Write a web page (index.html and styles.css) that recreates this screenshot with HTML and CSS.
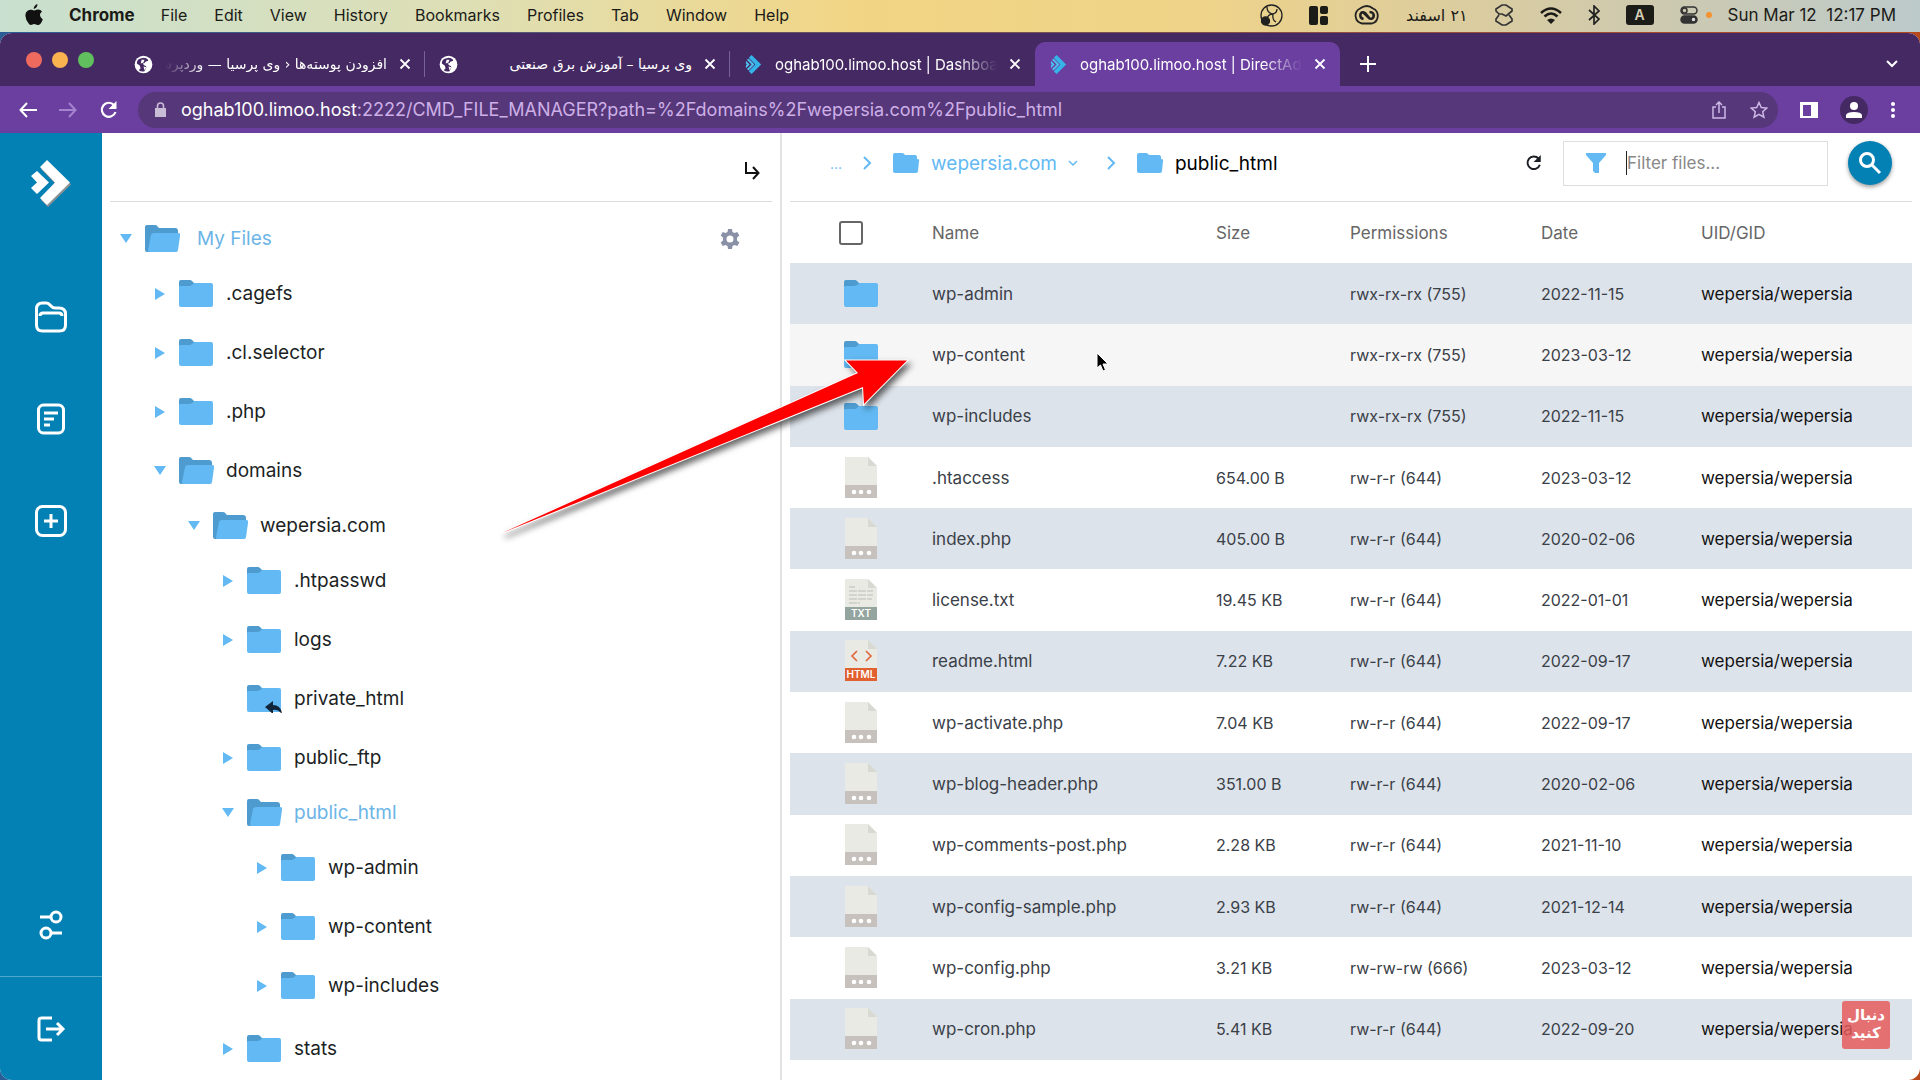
FILE: index.html
```html
<!DOCTYPE html>
<html lang="en">
<head>
    <meta charset="UTF-8">
    <meta name="viewport" content="width=device-width, initial-scale=1.0">
    <title>oghab100.limoo.host | DirectAdmin</title>
    <link rel="stylesheet" href="styles.css">
</head>
<body>
    <!-- Shared icons -->
    <svg class="sprite" width="0" height="0">
        <symbol id="folder" viewBox="0 0 36 29">
            <path d="M1 10V3a2 2 0 0 1 2-2h9q1 0 2 1l3 3v5z" fill="#4e9bcf"/>
            <path d="M1 8q0-1 2-1h9q2 0 4-3h17a2 2 0 0 1 2 2v20a2 2 0 0 1-2 2H3a2 2 0 0 1-2-2z" fill="#63b9f3"/>
        </symbol>
        <symbol id="folder-open" viewBox="0 0 36 29">
            <path d="M1 3a2 2 0 0 1 2-2h8q2 0 3 2l1 1h16a3 3 0 0 1 3 3v4L8 28H3a2 2 0 0 1-2-2z" fill="#4e9bcf"/>
            <path d="M7 11a3 3 0 0 1 3-2h24q3 0 2 3l-2 14a2 2 0 0 1-2 2H5q-1 0-1-2z" fill="#63b9f3"/>
        </symbol>
        <symbol id="folder-crumb" viewBox="0 0 28 22">
            <path d="M1 3a2 2 0 0 1 2-2h7q2 0 3 2h10a2 2 0 0 1 2 2v2q3 0 2 2l-1 10a2 2 0 0 1-2 2H3a2 2 0 0 1-2-2z" fill="#63b9f3"/>
        </symbol>
        <symbol id="file" viewBox="0 0 32 42">
            <path d="M0 0h23l9 9v32H0z" fill="#e9eae3"/>
            <path d="M23 0v9h9z" fill="#d8d9d2"/>
            <path d="M0 28h32v13H0z" fill="#c7c1be"/>
            <circle cx="9" cy="35" r="2.3" fill="#fff"/>
            <circle cx="16" cy="35" r="2.3" fill="#fff"/>
            <circle cx="24" cy="35" r="2.3" fill="#fff"/>
        </symbol>
        <symbol id="globe" viewBox="0 0 20 20">
            <circle cx="10" cy="10" r="9.3" fill="#fff"/>
            <path d="M10 3q4 0 5 3l-3 1q-1 2-3 2l2 2q2 0 2 2l-2 4q-3 1-6-1l2-2-1-3-3-2q0-4 3-5z" fill="#452963"/>
            <path d="M8 5l3 0-1 3-3 1zM10 12l3 1-2 3z" fill="#fff"/>
        </symbol>
        <symbol id="da" viewBox="0 0 18 20">
            <path d="M7 0l10 10L7 20l-3-3 7-7-7-7z" fill="#35b4ea"/>
            <path d="M1 6l4 4-4 4v-3l1-1-1-1zM4 4l6 6-6 6-2-1 5-5-5-5z" fill="#4cc0ee"/>
        </symbol>
        <symbol id="close" viewBox="0 0 12 12">
            <path d="M1.500 1.500l9 9M10.500 1.500l-9 9" stroke="currentColor" stroke-width="1.800"/>
        </symbol>
        <symbol id="reload" viewBox="0 0 20 20">
            <path d="M16.500 12A7 7 0 1 1 15 5" fill="none" stroke="currentColor" stroke-width="2.200"/>
            <path d="M17.500 1v8h-8z" fill="currentColor"/>
        </symbol>
        <symbol id="chevron" viewBox="0 0 10 16">
            <path d="M2 2l6 6-6 6" fill="none" stroke="currentColor" stroke-width="2"/>
        </symbol>
    </svg>

    <header class="menubar">
        <nav class="menu">
            <svg width="18" height="22" viewBox="0 0 18 22" fill="#111"><path d="M12.500 0q0 4-3.800 5Q8.500 1.500 12.500 0zM9 6.500q1 0 2.500-.7 3.500-1 5.500 1.700-4.500 3.500.8 8-2 5-4.300 5.500-1.300 0-2.500-.6-2-.6-3.500.1-2 1.200-3.500-.5-5-6-3-11.500 2-3.400 5.500-2.700z"/></svg>
            <a href="#" class="app">Chrome</a>
            <a href="#">File</a>
            <a href="#">Edit</a>
            <a href="#">View</a>
            <a href="#">History</a>
            <a href="#">Bookmarks</a>
            <a href="#">Profiles</a>
            <a href="#">Tab</a>
            <a href="#">Window</a>
            <a href="#">Help</a>
        </nav>
        <div class="status">
            <svg width="23" height="23" viewBox="0 0 23 23" fill="none" stroke="#222" stroke-width="1.300"><circle cx="11.500" cy="11.500" r="10.500"/><path d="M7 3q0 6 6 7 4-1 4-5M13 10q-1 6 3 8M13 10q-5 0-6 5"/><circle cx="5.500" cy="17" r="4" fill="#222"/></svg>
            <svg width="19" height="19" viewBox="0 0 19 19" fill="#1b1b18"><rect width="9" height="19" rx="2"/><rect x="11" width="8" height="8" rx="2"/><rect x="11" y="10" width="8" height="9" rx="2"/></svg>
            <svg width="26" height="20" viewBox="0 0 26 20" fill="none" stroke="#222"><path d="M8 18.500a8 8 0 0 1-2-15q7-5 13 0a8 8 0 0 1-1 15z" stroke-width="1.800"/><path d="M16 14l-5-6q-3-2-4.500 1-1 4 3 5M9 7l6 6q3 2 4.500-1 1-5-4-5" stroke-width="2.600"/></svg>
            <span class="persian" dir="rtl">۲۱ اسفند</span>
            <svg width="20" height="22" viewBox="0 0 20 22" fill="none" stroke="#333" stroke-width="1.700"><path d="M5 10L2 7V5l6-4h4l6 4v2l-6 5-4-2zM5 11l-3 4v2l6 4h4l6-4v-2l-3-4"/></svg>
            <svg width="22" height="17" viewBox="0 0 22 17" fill="none" stroke="#1b1b18" stroke-width="2.600"><path d="M1 6q10-9 20 0M4.500 9.500q6.500-6 13 0"/><path d="M11 17l-4-4q4-3 8 0z" fill="#1b1b18" stroke="none"/></svg>
            <svg width="12" height="20" viewBox="0 0 12 20" fill="none" stroke="#222" stroke-width="1.700"><path d="M1 5l10 9-5 5V1l5 5-10 9"/></svg>
            <span class="input-lang">A</span>
            <svg width="18" height="18" viewBox="0 0 18 18" fill="none" stroke="#333" stroke-width="1.500"><rect x="1" y="1" width="16" height="7" rx="3.500"/><rect x="1" y="10" width="16" height="7" rx="3.500" fill="#333"/><circle cx="4.500" cy="4.500" r="2.500"/><circle cx="13.500" cy="13.500" r="2.500" fill="#ddd"/></svg>
            <span class="dot"></span>
            <time>Sun Mar 12 &nbsp;12:17 PM</time>
        </div>
    </header>

    <div class="window">
        <div class="tabbar">
            <div class="lights"><i class="red"></i><i class="yellow"></i><i class="green"></i></div>
            <div class="tab">
                <svg width="19" height="19"><use href="#globe"/></svg>
                <span class="tab-title persian fade-left" dir="rtl">افزودن پوسته‌ها ‹ وی پرسیا — وردپرس</span>
                <button aria-label="Close"><svg width="12" height="12"><use href="#close"/></svg></button>
            </div>
            <div class="tab">
                <svg width="19" height="19"><use href="#globe"/></svg>
                <span class="tab-title persian" dir="rtl">وی پرسیا – آموزش برق صنعتی</span>
                <button aria-label="Close"><svg width="12" height="12"><use href="#close"/></svg></button>
            </div>
            <div class="tab no-line">
                <svg width="19" height="19"><use href="#da"/></svg>
                <span class="tab-title fade-right">oghab100.limoo.host | Dashboard</span>
                <button aria-label="Close"><svg width="12" height="12"><use href="#close"/></svg></button>
            </div>
            <div class="tab active">
                <svg width="19" height="19"><use href="#da"/></svg>
                <span class="tab-title fade-right">oghab100.limoo.host | DirectAdmin</span>
                <button aria-label="Close"><svg width="12" height="12"><use href="#close"/></svg></button>
            </div>
            <button class="new-tab" aria-label="New tab"><svg width="16" height="16" viewBox="0 0 16 16"><path d="M8 0v16M0 8h16" stroke="#fff" stroke-width="2"/></svg></button>
            <button class="tab-search" aria-label="Search tabs"><svg width="12" height="8" viewBox="0 0 12 8"><path d="M1 1l5 5 5-5" fill="none" stroke="#fff" stroke-width="2"/></svg></button>
        </div>

        <div class="toolbar">
            <button aria-label="Back"><svg width="18" height="16" viewBox="0 0 18 16"><path d="M8 1L1.500 8 8 15M2 8h16" fill="none" stroke="#fff" stroke-width="2"/></svg></button>
            <button aria-label="Forward"><svg width="18" height="16" viewBox="0 0 18 16"><path d="M10 1l6.500 7-6.500 7M16 8H0" fill="none" stroke="#a583cf" stroke-width="2"/></svg></button>
            <button aria-label="Reload"><svg width="20" height="20"><use href="#reload"/></svg></button>
            <div class="omnibox">
                <svg width="11" height="15" viewBox="0 0 11 15"><path d="M0 6h11v9H0z" fill="#c8bcd6"/><path d="M2.500 7V4q0-3 3-3t3 3v3" fill="none" stroke="#c8bcd6" stroke-width="1.600"/></svg>
                <div class="url" role="textbox" aria-label="Address"><b>oghab100.limoo.host</b>:2222/CMD_FILE_MANAGER?path=%2Fdomains%2Fwepersia.com%2Fpublic_html</div>
                <button aria-label="Share"><svg width="16" height="18" viewBox="0 0 16 18" fill="none" stroke="#cdb9e6" stroke-width="1.500"><path d="M5 6H2v11h12V6h-3M8 12V1M5 4l3-3 3 3"/></svg></button>
                <button aria-label="Bookmark"><svg width="18" height="18" viewBox="0 0 18 18" fill="none" stroke="#cdb9e6" stroke-width="1.500"><path d="M9 1.500l2.300 5 5.500.6-4.100 3.700 1.200 5.400L9 13.400l-4.900 2.800 1.200-5.400L1.200 7.100l5.500-.6z"/></svg></button>
            </div>
            <button aria-label="Side panel"><svg width="18" height="18" viewBox="0 0 18 18"><path d="M0 1h18v16H0z" fill="#fff"/><path d="M3 4h8v11H3z" fill="#6b3fa0"/></svg></button>
            <button class="avatar" aria-label="Profile"><svg width="16" height="16" viewBox="0 0 16 16" fill="#fff"><circle cx="8" cy="4" r="4"/><path d="M0 16v-3q1-3 8-3t8 3v3z"/></svg></button>
            <button aria-label="Menu"><svg width="6" height="18" viewBox="0 0 6 18" fill="#fff"><circle cx="3" cy="3" r="2"/><circle cx="3" cy="9" r="2"/><circle cx="3" cy="15" r="2"/></svg></button>
        </div>

        <div class="page">
            <aside class="sidebar">
                <a href="#" class="logo" aria-label="DirectAdmin"><svg width="42" height="48" viewBox="0 0 42 48"><path d="M18 3l23 22.500L18 48l-7-7 15-15.500-15-15.500z" fill="#8b9296"/><path d="M17 1l23 22.500L17 46l-7-7 15-15.500L10 8z" fill="#fff"/><path d="M7 12l12 11.500L7 35l-6-6 6-5.500L1 17z" fill="#fff"/></svg></a>
                <a href="#" aria-label="Files"><svg width="34" height="34" viewBox="0 0 34 34" fill="none" stroke="#fff" stroke-width="3"><path d="M2.500 9q0-6 6-6h4q2 0 4 2.500T21 8h4q6.500 0 6.500 6v11q0 6-6 6h-17q-6 0-6-6z"/><path d="M6 16q0-3 3-3h16q3 0 3 3"/></svg></a>
                <a href="#" aria-label="Logs"><svg width="34" height="34" viewBox="0 0 34 34" fill="none" stroke="#fff" stroke-width="3"><rect x="4.500" y="3" width="25" height="28" rx="5"/><path d="M10 11h14M10 17h10M10 23h6"/></svg></a>
                <a href="#" aria-label="Add"><svg width="34" height="34" viewBox="0 0 34 34" fill="none" stroke="#fff" stroke-width="3"><rect x="2.500" y="2.500" width="29" height="29" rx="6"/><path d="M17 10v14M10 17h14"/></svg></a>
                <a href="#" class="settings" aria-label="Settings"><svg width="34" height="34" viewBox="0 0 34 34" fill="none" stroke="#fff" stroke-width="3"><circle cx="22" cy="9" r="5"/><circle cx="12" cy="25" r="5"/><path d="M6 9h11M17 25h11"/></svg></a>
                <a href="#" class="logout" aria-label="Log out"><svg width="30" height="26" viewBox="0 0 30 26" fill="none" stroke="#fff" stroke-width="3"><path d="M16 2H5.500Q3 2 3 4.500v17Q3 24 5.500 24H16M10 13h16M21 7l6 6-6 6"/></svg></a>
            </aside>

            <section class="tree-panel">
                <div class="tree-head">
                    <button aria-label="Collapse"><svg width="16" height="18" viewBox="0 0 16 18"><path d="M2 0v11h12M9 5l5.500 6L9 17" fill="none" stroke="#111" stroke-width="2"/></svg></button>
                </div>
                <div class="tree">
                    <div class="node root">
                        <button class="toggle open" aria-label="Toggle"></button>
                        <svg width="36" height="29"><use href="#folder-open"/></svg>
                        <a href="#">My Files</a>
                        <button class="gear" aria-label="Tree settings"><svg width="20" height="20" viewBox="0 0 20 20"><path d="M8 0h4l.5 3 2 1 2.800-1 2 3.500L17 8.500v3l2.300 2-2 3.500-2.800-1-2 1-.5 3H8l-.5-3-2-1-2.800 1-2-3.500 2.300-2v-3L.7 6.500l2-3.500 2.800 1 2-1zM10 6.500a3.500 3.500 0 1 0 0 7 3.500 3.500 0 0 0 0-7z" fill="#8a90a6" fill-rule="evenodd"/></svg></button>
                    </div>
                    <ul>
                        <li><div class="node"><button class="toggle" aria-label="Toggle"></button><svg width="36" height="29"><use href="#folder"/></svg><a href="#">.cagefs</a></div></li>
                        <li><div class="node"><button class="toggle" aria-label="Toggle"></button><svg width="36" height="29"><use href="#folder"/></svg><a href="#">.cl.selector</a></div></li>
                        <li><div class="node"><button class="toggle" aria-label="Toggle"></button><svg width="36" height="29"><use href="#folder"/></svg><a href="#">.php</a></div></li>
                        <li>
                            <div class="node"><button class="toggle open" aria-label="Toggle"></button><svg width="36" height="29"><use href="#folder-open"/></svg><a href="#">domains</a></div>
                            <ul>
                                <li>
                                    <div class="node"><button class="toggle open" aria-label="Toggle"></button><svg width="36" height="29"><use href="#folder-open"/></svg><a href="#">wepersia.com</a></div>
                                    <ul>
                                        <li><div class="node"><button class="toggle" aria-label="Toggle"></button><svg width="36" height="29"><use href="#folder"/></svg><a href="#">.htpasswd</a></div></li>
                                        <li><div class="node"><button class="toggle" aria-label="Toggle"></button><svg width="36" height="29"><use href="#folder"/></svg><a href="#">logs</a></div></li>
                                        <li><div class="node"><span class="toggle none"></span><svg width="36" height="29" viewBox="0 0 36 29"><use href="#folder" width="36" height="29"/><path d="M19 23l8-6v4q8 0 9 9-4-5-9-4v4z" fill="#12263b"/></svg><a href="#">private_html</a></div></li>
                                        <li><div class="node"><button class="toggle" aria-label="Toggle"></button><svg width="36" height="29"><use href="#folder"/></svg><a href="#">public_ftp</a></div></li>
                                        <li class="selected">
                                            <div class="node"><button class="toggle open" aria-label="Toggle"></button><svg width="36" height="29"><use href="#folder-open"/></svg><a href="#" class="current">public_html</a></div>
                                            <ul>
                                                <li><div class="node"><button class="toggle" aria-label="Toggle"></button><svg width="36" height="29"><use href="#folder"/></svg><a href="#">wp-admin</a></div></li>
                                                <li><div class="node"><button class="toggle" aria-label="Toggle"></button><svg width="36" height="29"><use href="#folder"/></svg><a href="#">wp-content</a></div></li>
                                                <li><div class="node"><button class="toggle" aria-label="Toggle"></button><svg width="36" height="29"><use href="#folder"/></svg><a href="#">wp-includes</a></div></li>
                                            </ul>
                                        </li>
                                        <li><div class="node"><button class="toggle" aria-label="Toggle"></button><svg width="36" height="29"><use href="#folder"/></svg><a href="#">stats</a></div></li>
                                    </ul>
                                </li>
                            </ul>
                        </li>
                    </ul>
                </div>
            </section>

            <main class="files">
                <div class="files-head">
                    <nav class="crumbs">
                        <a href="#" class="more">...</a>
                        <svg width="10" height="16"><use href="#chevron"/></svg>
                        <a href="#" class="crumb"><svg width="28" height="22"><use href="#folder-crumb"/></svg>wepersia.com<svg width="10" height="7" viewBox="0 0 10 7"><path d="M1 1l4 4 4-4" fill="none" stroke="#63b9f3" stroke-width="1.500"/></svg></a>
                        <svg width="10" height="16"><use href="#chevron"/></svg>
                        <a href="#" class="crumb here"><svg width="28" height="22"><use href="#folder-crumb"/></svg>public_html</a>
                    </nav>
                    <button class="refresh" aria-label="Refresh"><svg width="18" height="18"><use href="#reload"/></svg></button>
                    <label class="filter">
                        <svg width="20" height="22" viewBox="0 0 20 22"><path d="M0 1h20v2l-7 8v10H9l-2-2v-8L0 3z" fill="#63b9f3"/></svg>
                        <input type="text" placeholder="Filter files..." aria-label="Filter files">
                    </label>
                    <button class="search" aria-label="Search"><svg width="24" height="24" viewBox="0 0 24 24" fill="none" stroke="#fff" stroke-width="3"><circle cx="9" cy="9" r="6.500"/><path d="M14 14l8 8"/></svg></button>
                </div>

                <table>
                    <colgroup>
                        <col class="col-icon"><col><col class="col-size"><col class="col-perm"><col class="col-date"><col class="col-uid">
                    </colgroup>
                    <thead>
                        <tr><th><input type="checkbox" aria-label="Select all"></th><th>Name</th><th>Size</th><th>Permissions</th><th>Date</th><th>UID/GID</th></tr>
                    </thead>
                    <tbody>
                        <tr><td><svg width="36" height="29"><use href="#folder"/></svg></td><td>wp-admin</td><td></td><td>rwx-rx-rx (755)</td><td>2022-11-15</td><td>wepersia/wepersia</td></tr>
                        <tr class="hover"><td><svg width="36" height="29"><use href="#folder"/></svg></td><td>wp-content</td><td></td><td>rwx-rx-rx (755)</td><td>2023-03-12</td><td>wepersia/wepersia</td></tr>
                        <tr><td><svg width="36" height="29"><use href="#folder"/></svg></td><td>wp-includes</td><td></td><td>rwx-rx-rx (755)</td><td>2022-11-15</td><td>wepersia/wepersia</td></tr>
                        <tr><td><svg width="32" height="42"><use href="#file"/></svg></td><td>.htaccess</td><td>654.00 B</td><td>rw-r-r (644)</td><td>2023-03-12</td><td>wepersia/wepersia</td></tr>
                        <tr><td><svg width="32" height="42"><use href="#file"/></svg></td><td>index.php</td><td>405.00 B</td><td>rw-r-r (644)</td><td>2020-02-06</td><td>wepersia/wepersia</td></tr>
                        <tr>
                            <td>
                                <svg width="32" height="42" viewBox="0 0 32 42">
                                    <path d="M0 0h23l9 9v32H0z" fill="#e9eae3"/>
                                    <path d="M23 0v9h9z" fill="#d8d9d2"/>
                                    <path d="M4 8h6M4 12h24M4 16h24M4 20h23M4 24h11" stroke="#b9bcb5" stroke-dasharray="8 1"/>
                                    <path d="M0 28h32v13H0z" fill="#94a49f"/>
                                    <text x="16" y="38" text-anchor="middle" font-size="10" font-weight="600" fill="#fff">TXT</text>
                                </svg>
                            </td>
                            <td>license.txt</td><td>19.45 KB</td><td>rw-r-r (644)</td><td>2022-01-01</td><td>wepersia/wepersia</td>
                        </tr>
                        <tr>
                            <td>
                                <svg width="32" height="42" viewBox="0 0 32 42">
                                    <path d="M0 0h23l9 9v32H0z" fill="#e9eae3"/>
                                    <path d="M23 0v9h9z" fill="#d8d9d2"/>
                                    <path d="M12 11l-5 5 5 5M21 11l5 5-5 5" fill="none" stroke="#e2643a" stroke-width="1.600"/>
                                    <path d="M0 28h32v13H0z" fill="#e1602f"/>
                                    <text x="16" y="38" text-anchor="middle" font-size="10" font-weight="600" fill="#fff">HTML</text>
                                </svg>
                            </td>
                            <td>readme.html</td><td>7.22 KB</td><td>rw-r-r (644)</td><td>2022-09-17</td><td>wepersia/wepersia</td>
                        </tr>
                        <tr><td><svg width="32" height="42"><use href="#file"/></svg></td><td>wp-activate.php</td><td>7.04 KB</td><td>rw-r-r (644)</td><td>2022-09-17</td><td>wepersia/wepersia</td></tr>
                        <tr><td><svg width="32" height="42"><use href="#file"/></svg></td><td>wp-blog-header.php</td><td>351.00 B</td><td>rw-r-r (644)</td><td>2020-02-06</td><td>wepersia/wepersia</td></tr>
                        <tr><td><svg width="32" height="42"><use href="#file"/></svg></td><td>wp-comments-post.php</td><td>2.28 KB</td><td>rw-r-r (644)</td><td>2021-11-10</td><td>wepersia/wepersia</td></tr>
                        <tr><td><svg width="32" height="42"><use href="#file"/></svg></td><td>wp-config-sample.php</td><td>2.93 KB</td><td>rw-r-r (644)</td><td>2021-12-14</td><td>wepersia/wepersia</td></tr>
                        <tr><td><svg width="32" height="42"><use href="#file"/></svg></td><td>wp-config.php</td><td>3.21 KB</td><td>rw-rw-rw (666)</td><td>2023-03-12</td><td>wepersia/wepersia</td></tr>
                        <tr><td><svg width="32" height="42"><use href="#file"/></svg></td><td>wp-cron.php</td><td>5.41 KB</td><td>rw-r-r (644)</td><td>2022-09-20</td><td>wepersia/wepersia</td></tr>
                    </tbody>
                </table>
            </main>
        </div>
    </div>

    <!-- Red arrow pointing at wp-content -->
    <svg class="arrow" width="420" height="190" viewBox="0 0 420 190">
        <path d="M2 178L358 18l-12-12.500h61L364 49l-1-17z" fill="#f00" stroke="#fff" stroke-width="2" paint-order="stroke"/>
    </svg>
    <svg class="cursor" width="14" height="20" viewBox="0 0 14 20"><path d="M1 1v15l3.500-3 2.500 6 2.500-1-2.500-6h5z" fill="#000" stroke="#fff"/></svg>
    <div class="follow" dir="rtl">دنبال<br>کنید</div>
</body>
</html>
```
FILE: styles.css
```css
* {
    box-sizing: border-box;
}

body {
    margin: 0;
    min-height: 100vh;
    display: flex;
    flex-direction: column;
    background: linear-gradient(to right, #2c5d96, #b8481c);
    font-family: Inter, "DejaVu Sans", sans-serif;
    font-size: 17px;
    color: #1c1f24;
    overflow: hidden;
}

a {
    color: inherit;
    text-decoration: none;
}

button {
    display: flex;
    align-items: center;
    justify-content: center;
    padding: 0;
    border: none;
    background: none;
    color: inherit;
    cursor: pointer;
}

svg {
    flex: none;
    display: block;
}

.sprite {
    position: absolute;
}

.persian {
    font-family: "DejaVu Sans", sans-serif;
}

/* Menu bar */
.menubar {
    height: 32px;
    display: flex;
    align-items: center;
    justify-content: space-between;
    padding: 0 24px 2px 25px;
    background: linear-gradient(to right, #c8e0cf, #dfdfb4 25%, #f2d584 45%, #efd388 62%, #cfc9ad 85%, #bccaca);
    font-size: 16px;
    color: #1b1b18;
}

.menu {
    display: flex;
    align-items: center;
    gap: 26px;
}

.app {
    font-size: 17px;
    font-weight: 700;
}

.menu a:not(.app) {
    margin-right: 1px;
}

.status {
    display: flex;
    align-items: center;
    gap: 26px;
}

.status time {
    font-size: 17px;
}

.input-lang {
    width: 28px;
    line-height: 20px;
    border-radius: 3px;
    background: #1b1b18;
    color: #d5ceb6;
    text-align: center;
    font-size: 14px;
    font-weight: 600;
}

.dot {
    width: 6px;
    height: 6px;
    margin-left: -18px;
    margin-right: -10px;
    border-radius: 50%;
    background: #f59331;
}

/* Browser */
.window {
    flex: 1;
    margin-top: 1px;
    display: flex;
    flex-direction: column;
    border-radius: 12px;
    overflow: hidden;
    background: #fff;
}

.tabbar {
    height: 53px;
    display: flex;
    align-items: flex-end;
    background: #452963;
    color: #fff;
    font-size: 15px;
}

.tabbar .persian {
    font-size: 14px;
}

.lights {
    width: 120px;
    height: 53px;
    display: flex;
    align-items: center;
    gap: 10px;
    padding-left: 26px;
}

.lights i {
    width: 16px;
    height: 16px;
    border-radius: 50%;
}

.red {
    background: #ee6a5f;
}

.yellow {
    background: #f9b24f;
}

.green {
    background: #61bf5d;
}

.tab {
    width: 305px;
    height: 44px;
    display: flex;
    align-items: center;
    gap: 12px;
    padding: 0 14px;
    border-radius: 10px 10px 0 0;
    background: linear-gradient(#77619a, #77619a) right center / 1px 26px no-repeat;
}

.tab.no-line {
    background: none;
}

.tab.active {
    background: #6b3fa0;
}

.tab-title {
    flex: 1;
    overflow: hidden;
    white-space: nowrap;
}

.fade-right {
    mask-image: linear-gradient(to left, transparent, #000 40px);
}

.fade-left {
    mask-image: linear-gradient(to right, transparent, #000 40px);
}

.new-tab {
    width: 56px;
    height: 44px;
}

.tab-search {
    width: 56px;
    height: 44px;
    margin-left: auto;
}

.toolbar {
    height: 47px;
    display: flex;
    align-items: center;
    gap: 22px;
    padding: 0 24px 0 19px;
    background: #6b3fa0;
    color: #fff;
}

.omnibox {
    flex: 1;
    height: 36px;
    display: flex;
    align-items: center;
    gap: 23px;
    margin-left: -3px;
    padding: 0 10px 0 17px;
    border-radius: 18px;
    background: #563779;
    font-size: 18px;
}

.omnibox > svg {
    margin-right: -8px;
}

.url {
    flex: 1;
    color: #cdb0e8;
}

.url b {
    color: #fff;
    font-weight: 400;
}

.avatar {
    width: 28px;
    height: 28px;
    border-radius: 50%;
    background: #452963;
}

/* Page */
.page {
    flex: 1;
    display: flex;
}

.sidebar {
    width: 102px;
    display: flex;
    flex-direction: column;
    align-items: center;
    padding-top: 26px;
    background: #0481b4;
}

.sidebar a {
    height: 102px;
    display: flex;
    align-items: center;
}

.sidebar .logo {
    height: 48px;
    margin-bottom: 59px;
}

.sidebar .settings {
    margin-top: auto;
}

.sidebar .logout {
    width: 100%;
    height: 104px;
    justify-content: center;
    border-top: 1px solid #4fa8cc;
}

.tree-panel {
    width: 680px;
    border-right: 2px solid #e2e2e2;
    padding: 0 8px;
}

.tree-head {
    height: 69px;
    display: flex;
    align-items: center;
    justify-content: flex-end;
    padding: 8px 12px 0;
    border-bottom: 1px solid #dcdcdc;
}

.tree {
    padding: 9px 0 0 7px;
    font-size: 19px;
}

.tree ul {
    list-style: none;
    margin: 0;
    padding: 0 0 0 34px;
}

.tree li + li {
    margin-top: 4px;
}

.tree li.selected {
    margin-top: 0;
}

.tree li.selected ul {
    padding-bottom: 4px;
}

.node {
    height: 55px;
    display: flex;
    align-items: center;
}

.node a {
    margin-left: 12px;
}

.root a {
    margin-left: 17px;
}

.toggle {
    width: 18px;
    margin-right: 9px;
}

.toggle::before {
    content: "";
    border: solid transparent;
    border-width: 6px 0 6px 10px;
    border-left-color: #63b9f3;
}

.toggle.open::before {
    border-width: 9px 6px 0;
    border-color: #63b9f3 transparent transparent;
}

.toggle.none::before {
    content: none;
}

.root a,
.node .current {
    color: #6cb5e6;
}

.gear {
    margin-left: auto;
    margin-right: 32px;
}

.files {
    flex: 1;
    display: flex;
    flex-direction: column;
    padding: 0 8px 20px;
}

.files-head {
    height: 69px;
    display: flex;
    align-items: center;
    padding: 0 20px 8px 40px;
    border-bottom: 1px solid #dcdcdc;
}

.crumbs {
    flex: 1;
    display: flex;
    align-items: center;
    gap: 20px;
    font-size: 19px;
    color: #63b9f3;
}

.more {
    font-size: 14px;
}

.crumb {
    display: flex;
    align-items: center;
    gap: 11px;
    margin-right: 8px;
}

.here {
    color: #000;
}

.filter {
    width: 265px;
    height: 45px;
    display: flex;
    align-items: center;
    gap: 20px;
    margin: 0 20px;
    padding: 0 22px;
    border: 1px solid #dedede;
}

.filter input {
    width: 100%;
    height: 24px;
    padding: 0;
    border: none;
    border-left: 1px solid #222;
    outline: none;
    font: inherit;
}

.filter input::placeholder {
    color: #888;
}

.search {
    width: 44px;
    height: 44px;
    border-radius: 50%;
    background: #0481b4;
    box-shadow: 0 2px 4px rgba(0, 0, 0, 0.4);
}

table {
    flex: 1;
    width: 100%;
    table-layout: fixed;
    border-collapse: collapse;
    font-size: 16px;
}

.col-icon {
    width: 142px;
}

.col-size {
    width: 134px;
}

.col-perm {
    width: 191px;
}

.col-date {
    width: 160px;
}

.col-uid {
    width: 211px;
}

th {
    height: 61px;
    padding: 0;
    text-align: left;
    font-size: 17px;
    font-weight: 400;
    color: #666;
}

th input {
    appearance: none;
    display: block;
    width: 24px;
    height: 24px;
    margin: 0 0 0 49px;
    border: 2px solid #666;
    border-radius: 3px;
}

td {
    height: 61px;
    padding: 0;
    color: #3a4048;
}

td:first-child svg {
    margin: 0 auto;
}

td:nth-child(2) {
    font-size: 17px;
}

td:last-child {
    font-size: 17px;
    color: #111;
}

tbody tr:nth-child(odd) {
    background: #dde3ea;
}

tbody .hover {
    background: #f6f6f6;
}

/* Things lying over the page */
.arrow {
    position: absolute;
    left: 500px;
    top: 355px;
    filter: drop-shadow(3px 4px 3px rgba(0, 0, 0, 0.6));
}

.cursor {
    position: absolute;
    left: 1096px;
    top: 352px;
}

.follow {
    position: absolute;
    right: 30px;
    bottom: 31px;
    width: 48px;
    height: 48px;
    padding-top: 5px;
    border-radius: 3px;
    background: rgba(229, 92, 92, 0.85);
    color: #fff;
    font: bold 15px/18px "DejaVu Sans", sans-serif;
    text-align: center;
}
```
